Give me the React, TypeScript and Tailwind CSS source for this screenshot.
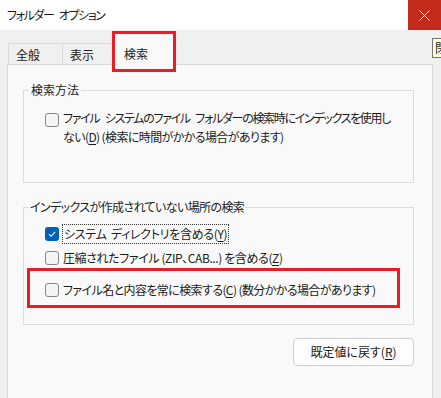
import React from 'react';

const Box: React.FC<{ checked?: boolean }> = ({ checked }) =>
    checked ? (
        <span className="block w-[14px] h-[14px] shrink-0 rounded-[3px] bg-[#005fb8]">
            <svg width="14" height="14" viewBox="0 0 14 14" className="block">
                <path d="M4 7.2 L6.1 9.3 L10.2 4.8" fill="none" stroke="white" strokeWidth="1.1" />
            </svg>
        </span>
    ) : (
        <span className="block w-[14px] h-[14px] shrink-0 rounded-[3px] border border-[#878787] bg-[#f4f4f4]" />
    );

const Key: React.FC<{ k: string }> = ({ k }) => (
    <>
        (<span className="underline underline-offset-2">{k}</span>)
    </>
);

export default function App() {
    return (
        <div className="relative w-[441px] h-[398px] overflow-hidden bg-[#f0f0f0] text-[12px] text-[#1a1a1a] tracking-[-0.6px] font-['Noto_Sans_CJK_JP',sans-serif] [font-feature-settings:'palt']">
            {/* タイトルバー */}
            <div className="h-[30px] bg-white flex items-center justify-between">
                <span className="pl-[7px] leading-[16px] tracking-[-1.4px] [word-spacing:4px]">フォルダー オプション</span>
                <div className="w-[33px] h-[30px] bg-[#c42b1c] flex items-center justify-center">
                    <svg width="11" height="11" viewBox="0 0 11 11">
                        <path d="M0.5 0.5 L10.5 10.5 M10.5 0.5 L0.5 10.5" stroke="white" strokeWidth="1" />
                    </svg>
                </div>
            </div>

            <div className="pl-[7px] pt-[3px]">
                {/* タブ */}
                <div className="flex items-end h-[31px] pl-[1px] tracking-normal">
                    <div className="w-[54px] h-[21px] border-t border-l border-[#d9d9d9] pl-[7px] leading-[21px]">全般</div>
                    <div className="w-[54px] h-[21px] border-t border-l border-r border-[#d9d9d9] pl-[7px] leading-[21px]">表示</div>
                    <div className="relative z-10 -ml-[2px] -mb-px w-[60px] h-[32px] border border-b-0 border-[#d9d9d9] bg-[#f9f9f9] pl-[9px] pt-[12px] leading-[16px]">
                        検索
                        <div className="absolute -left-[3px] -top-[3px] w-[64px] h-[41px] border-[3px] border-[#ed1c24]" />
                    </div>
                </div>

                {/* タブ内容 */}
                <div className="w-[426px] h-[400px] border border-[#d9d9d9] bg-[#f9f9f9] pl-[15px] pt-[17px]">
                    <fieldset className="w-[391px] border border-[#dcdcdc]">
                        <legend className="ml-[5px] px-[2px] leading-[16px] tracking-normal">検索方法</legend>
                        <div className="pl-[21px] pt-[10px] pb-[36px] flex items-start gap-[4px]">
                            <span className="mt-[5px]"><Box /></span>
                            <span className="leading-[19px] whitespace-nowrap">
                                <span className="tracking-[-1.3px] [word-spacing:4px]">ファイル システムのファイル フォルダーの検索時にインデックスを使用し</span><br />
                                ない<Key k="D" /> (検索に時間がかかる場合があります)
                            </span>
                        </div>
                    </fieldset>

                    <fieldset className="mt-[16px] w-[391px] border border-[#dcdcdc]">
                        <legend className="ml-[5px] px-[1px] leading-[16px]">インデックスが作成されていない場所の検索</legend>
                        <div className="pt-[7px] pb-[16px]">
                            <div className="h-[24px] pl-[21px] flex items-center gap-[3px]">
                                <Box checked />
                                <span className="border border-dotted border-[#333] px-[1px] leading-[18px] whitespace-nowrap tracking-[-0.3px] [word-spacing:2px]">
                                    システム ディレクトリを含める<Key k="Y" />
                                </span>
                            </div>
                            <div className="h-[24px] pl-[21px] flex items-center gap-[4px]">
                                <Box />
                                <span className="leading-[18px] whitespace-nowrap tracking-[-0.4px]">
                                    圧縮されたファイル (ZIP、CAB...) を含める<Key k="Z" />
                                </span>
                            </div>
                            <div className="-mt-[2px] ml-[3px] w-[373px] h-[40px] border-[3px] border-[#ed1c24] pl-[15px] pt-[4px] flex items-center gap-[4px]">
                                <Box />
                                <span className="leading-[18px] whitespace-nowrap">
                                    ファイル名と内容を常に検索する<Key k="C" /> (数分かかる場合があります)
                                </span>
                            </div>
                        </div>
                    </fieldset>

                    <div className="w-[391px] mt-[13px] flex justify-end">
                        <button className="w-[121px] h-[28px] border border-[#d0d0d0] rounded-[4px] bg-[#fdfdfd] text-[12px] leading-[16px] tracking-normal">
                            既定値に戻す<Key k="R" />
                        </button>
                    </div>
                </div>
            </div>

            {/* ツールチップ */}
            <div className="absolute left-[432px] top-[38px] w-[9px] h-[20px] overflow-hidden border-l border-y border-[#767676] bg-[#ffffe1] pl-[2px] leading-[18px] tracking-normal">
                閉
            </div>
        </div>
    );
}
